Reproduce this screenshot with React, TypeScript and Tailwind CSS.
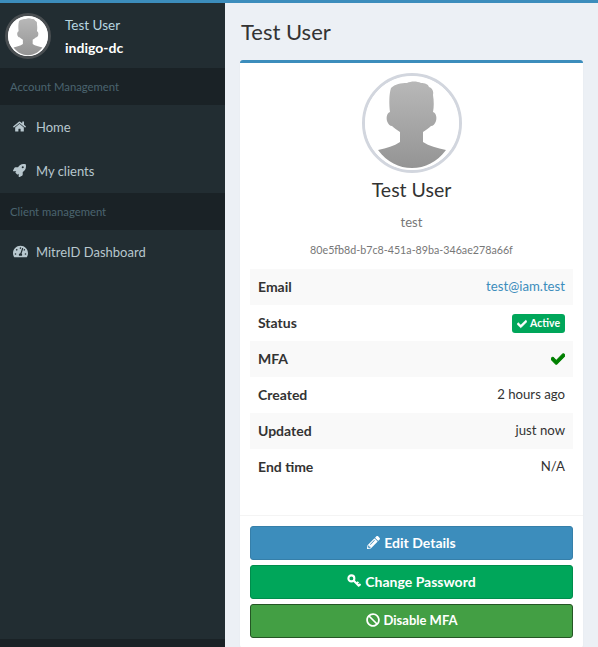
import { FaHome, FaRocket, FaTachometerAlt, FaCheck, FaPencilAlt, FaBan } from "react-icons/fa";

function Avatar({ id }: { id: string }) {
  return (
    <svg viewBox="0 0 94 94" className="block w-full h-full">
      <defs>
        <linearGradient id={id} x1="0" y1="0" x2="0" y2="1">
          <stop offset="0" stopColor="#b8b8b8" />
          <stop offset="1" stopColor="#949494" />
        </linearGradient>
      </defs>
      <circle cx="47" cy="47" r="47" fill="#fff" />
      <path
        fill={`url(#${id})`}
        d="M26 12 C30 8 36 7 42 7 C46 5 52 5 56 7 C60 7 63 8 64 11 C67 12 69 15 68 19 C69 25 69 31 68 36 C71 37 72 41 71 45 C70 48 68 50 66 50 C64 52 61 54 58 56 L58 66 C64 70 72 72 81 74 C72 86 60 92 47 92 C34 92 22 86 13 74 C22 72 29 70 35 66 L35 56 C32 54 29 52 27 50 C25 50 23 48 22 45 C21 41 22 37 25 36 C24 28 24 18 26 12 Z"
      />
    </svg>
  );
}

function KeyIcon() {
  return (
    <svg viewBox="0 0 16 16" className="w-[14px] h-[14px]" fill="none" stroke="currentColor">
      <circle cx="5" cy="5" r="3.4" strokeWidth="2.4" />
      <path d="M7.5 7.5 L14 14 M11 11 L13 9 M13.5 13.5 L15.5 11.5" strokeWidth="2.4" />
    </svg>
  );
}

function NavItem({ icon, label }: { icon: React.ReactNode; label: string }) {
  return (
    <div className="h-11 flex items-center pl-[13px] text-[13px] text-[#b8c7ce]">
      <span className="w-[23px] flex items-center pb-[1px]">{icon}</span>
      <span className="pt-[2px]">{label}</span>
    </div>
  );
}

function Section({ label }: { label: string }) {
  return <div className="h-[37px] flex items-center pl-[10px] pt-[1px] bg-[#1a2226] text-[11.3px] text-[#4b646f]">{label}</div>;
}

function Row({ label, striped, children }: { label: string; striped?: boolean; children: React.ReactNode }) {
  return (
    <div className={`h-9 flex items-center justify-between px-2 pb-[2px] text-[13.2px] text-[#333] ${striped ? "bg-[#f9f9f9]" : ""}`}>
      <span className="font-bold text-[14px]">{label}</span>
      <span className="flex items-center">{children}</span>
    </div>
  );
}

function Btn({ cls, icon, label, text }: { cls: string; icon: React.ReactNode; label: string; text: string }) {
  return (
    <div className={`h-[34px] pb-[2px] flex items-center justify-center gap-1 rounded-[3px] border font-bold text-white ${cls}`}>
      {icon}
      <span className={text}>{label}</span>
    </div>
  );
}

export default function App() {
  return (
    <div className="h-[647px] w-[598px] overflow-hidden flex flex-col bg-[#ecf0f5] font-['Lato','Liberation_Sans',sans-serif]">
      <div className="h-[3px] bg-[#3c8dbc] shrink-0" />
      <div className="flex flex-1 min-h-0">
        <aside className="w-[225px] shrink-0 bg-[#222d32] flex flex-col">
          <div className="h-[65px] flex items-start pl-[5px] pt-[10px] shrink-0">
            <div className="w-[46px] h-[46px] rounded-full border-[3px] border-[#4a4f52] overflow-hidden shrink-0 bg-white">
              <Avatar id="a1" />
            </div>
            <div className="ml-[14px] text-[13.5px] leading-[23px]">
              <div className="text-[#b8d6e0] pt-[1px] -mb-[1px]">Test User</div>
              <div className="font-bold text-white text-[14px]">indigo-dc</div>
            </div>
          </div>
          <Section label="Account Management" />
          <NavItem icon={<FaHome size={13} />} label="Home" />
          <NavItem icon={<FaRocket size={13} />} label="My clients" />
          <Section label="Client management" />
          <NavItem icon={<FaTachometerAlt size={15} />} label="MitreID Dashboard" />
          <div className="flex-1" />
          <div className="h-2 bg-[#1a2226] shrink-0" />
        </aside>
        <main className="flex-1 min-w-0 pl-[15px] pr-[15px]">
          <h1 className="text-[22px] leading-[26px] text-[#333] mt-[16px] mb-[15px] pl-[1px]">Test User</h1>
          <section className="bg-white border-t-[3px] border-[#3c8dbc] rounded-[3px] shadow-[0_1px_1px_rgba(0,0,0,0.1)]">
            <div className="px-[10px] pt-[10px]">
              <div className="flex flex-col items-center">
                <div className="w-[100px] h-[100px] rounded-full border-[3px] border-[#d2d6de] overflow-hidden bg-white">
                  <Avatar id="a2" />
                </div>
                <div className="text-[19.5px] leading-[26px] text-[#333] mt-[4px]">Test User</div>
                <div className="text-[13px] leading-5 text-[#777] mt-[9px]">test</div>
                <div className="text-[10.7px] leading-4 text-[#777] mt-[10px]">80e5fb8d-b7c8-451a-89ba-346ae278a66f</div>
              </div>
              <div className="mt-[11px] pb-[30px]">
                <Row label="Email" striped><span className="text-[#3c8dbc] pt-[2px]">test@iam.test</span></Row>
                <Row label="Status">
                  <span className="h-[19px] mt-[3px] px-[5px] rounded-[3px] bg-[#00a65a] text-white text-[10.5px] font-bold flex items-center gap-[3px]">
                    <FaCheck size={10} stroke="currentColor" strokeWidth={30} /> Active
                  </span>
                </Row>
                <Row label="MFA" striped><FaCheck size={14} className="text-[#008000] mt-[1px]" stroke="currentColor" strokeWidth={40} /></Row>
                <Row label="Created"><span className="pt-[2px]">2 hours ago</span></Row>
                <Row label="Updated" striped><span className="pt-[2px]">just now</span></Row>
                <Row label="End time"><span className="pt-[2px]">N/A</span></Row>
              </div>
            </div>
            <div className="border-t border-[#f4f4f4] px-[10px] pt-[10px] pb-[10px] flex flex-col gap-[5px]">
              <Btn cls="bg-[#3c8dbc] border-[#367fa9]" icon={<FaPencilAlt size={13} />} label="Edit Details" text="text-[14px]" />
              <Btn cls="bg-[#00a65a] border-[#008d4c]" icon={<KeyIcon />} label="Change Password" text="text-[14px]" />
              <Btn cls="bg-[#439f44] border-[#255625]" icon={<FaBan size={14} />} label="Disable MFA" text="text-[13px] pt-[2px]" />
            </div>
          </section>
        </main>
      </div>
    </div>
  );
}
